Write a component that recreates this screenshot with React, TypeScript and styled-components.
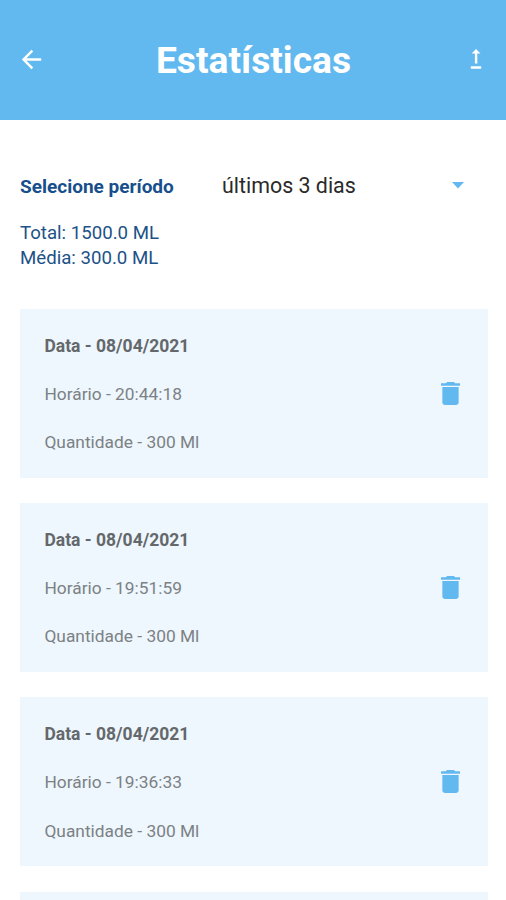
import React from "react";
import styled, { createGlobalStyle } from "styled-components";

const GlobalStyle = createGlobalStyle`
  *, *::before, *::after { box-sizing: border-box; }
  body { margin: 0; background: #fff; font-family: Roboto, sans-serif; }
`;

const Screen = styled.main`
  display: flex;
  flex-direction: column;
  height: 900px;
  overflow: hidden;
  background: #fff;
`;

const Header = styled.header`
  display: grid;
  grid-template-columns: 62px 1fr 61px;
  align-items: center;
  flex: none;
  height: 120px;
  padding-bottom: 2px;
  background: #62b9ef;
  color: #fff;
`;

const Title = styled.h1`
  margin: 2px 0 0;
  font-size: 37.2px;
  line-height: 44px;
  font-weight: 700;
  text-align: center;
  white-space: nowrap;
`;

const IconButton = styled.button<{ $color: string }>`
  display: flex;
  align-items: center;
  justify-content: center;
  padding: 0;
  border: 0;
  background: none;
  color: ${(p) => p.$color};
`;

const DeleteButton = styled(IconButton)`
  margin-bottom: 2px;
`;

const Filter = styled.section`
  display: flex;
  align-items: center;
  flex: none;
  height: 32px;
  margin: 50px 20px 0;
`;

const FilterLabel = styled.span`
  width: 202px;
  padding-top: 2px;
  color: #174f8c;
  font-size: 19px;
  line-height: 24px;
  font-weight: 700;
`;

const Picker = styled.button`
  display: flex;
  align-items: center;
  justify-content: space-between;
  flex: 1;
  padding: 0 22px 0 0;
  border: 0;
  background: none;
  color: #2a2a2a;
  font: 400 21.4px/28px Roboto, sans-serif;

  svg {
    margin-bottom: 2px;
  }
`;

const Summary = styled.section`
  flex: none;
  margin: 19px 20px 0;
  color: #1c5287;
  font-size: 18.65px;
  line-height: 25.4px;
`;

const List = styled.section`
  display: flex;
  flex-direction: column;
  gap: 25.2px;
  margin: 37.2px 18px 0 20px;
`;

const Card = styled.article`
  display: flex;
  align-items: center;
  justify-content: space-between;
  flex: none;
  height: 169px;
  padding: 1px 28px 0 24.4px;
  background: #eef7fe;
`;

const Details = styled.div`
  display: flex;
  flex-direction: column;
  gap: 24.3px;
`;

const Line = styled.span<{ $bold?: boolean }>`
  color: ${(p) => (p.$bold ? "#64686b" : "#7c8184")};
  font-size: ${(p) => (p.$bold ? 17.5 : 17.35)}px;
  line-height: 24px;
  font-weight: ${(p) => (p.$bold ? 700 : 400)};
`;

const entries = [
  { date: "08/04/2021", time: "20:44:18", amount: 300 },
  { date: "08/04/2021", time: "19:51:59", amount: 300 },
  { date: "08/04/2021", time: "19:36:33", amount: 300 },
];

export default function App() {
  return (
    <>
      <GlobalStyle />
      <Screen>
        <Header>
          <IconButton $color="#fff" aria-label="Voltar">
            <svg width="29" height="29" viewBox="0 0 24 24" fill="currentColor">
              <path d="M20 11H7.83l5.59-5.59L12 4l-8 8 8 8 1.41-1.41L7.83 13H20v-2z" />
            </svg>
          </IconButton>
          <Title>Estatísticas</Title>
          <IconButton $color="#fff" aria-label="Exportar">
            <svg width="12" height="20" viewBox="0 0 12 20" fill="currentColor">
              <path d="M6 0l4.5 4.5H7.3V14.5H4.9V4.5H1.7zM.8 17.2h10.4v2.6H.8z" />
            </svg>
          </IconButton>
        </Header>
        <Filter>
          <FilterLabel>Selecione período</FilterLabel>
          <Picker>
            últimos 3 dias
            <svg width="12" height="7" viewBox="0 0 12 7" fill="#62b9ef">
              <path d="M0 0h12L6 6.5z" />
            </svg>
          </Picker>
        </Filter>
        <Summary>
          <div>Total: 1500.0 ML</div>
          <div>Média: 300.0 ML</div>
        </Summary>
        <List>
          {entries.map((e) => (
            <Card key={e.time}>
              <Details>
                <Line $bold>Data - {e.date}</Line>
                <Line>Horário - {e.time}</Line>
                <Line>Quantidade - {e.amount} Ml</Line>
              </Details>
              <DeleteButton $color="#62b9ef" aria-label="Excluir">
                <svg width="19" height="23" viewBox="5 3 14 18" preserveAspectRatio="none" fill="currentColor">
                  <path d="M6 19c0 1.1.9 2 2 2h8c1.1 0 2-.9 2-2V7H6v12zM19 4h-3.5l-1-1h-5l-1 1H5v2h14V4z" />
                </svg>
              </DeleteButton>
            </Card>
          ))}
          <Card />
        </List>
      </Screen>
    </>
  );
}
